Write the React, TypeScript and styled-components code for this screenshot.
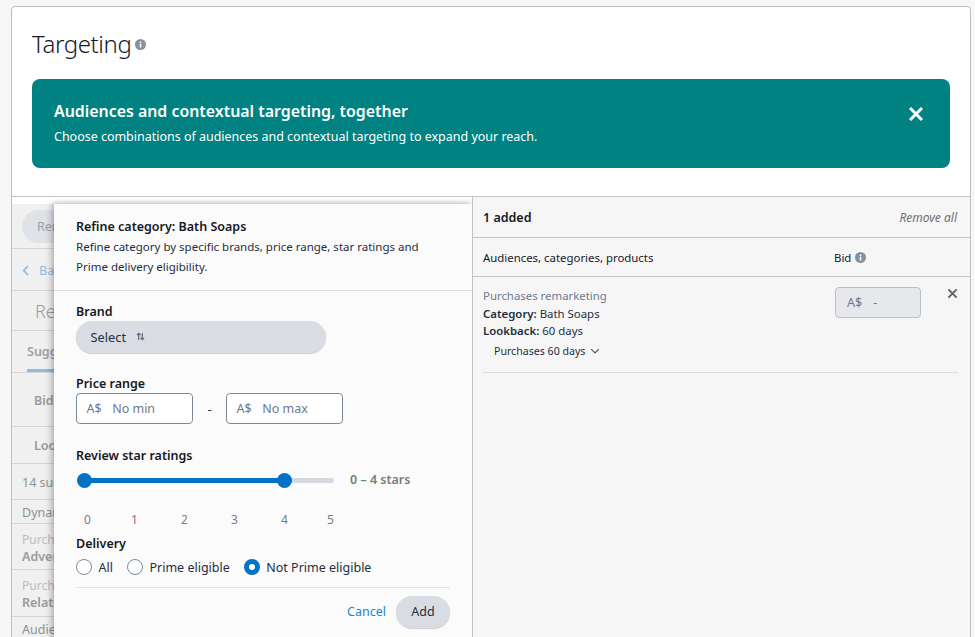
import React from "react";
import styled, { createGlobalStyle } from "styled-components";

const Global = createGlobalStyle`
  html, body { margin: 0; height: 637px; overflow: hidden; background: #f7f7f7; }
  body { font-family: "Noto Sans", "Liberation Sans", sans-serif; font-size: 13px; color: #232f3e; }
  * { box-sizing: border-box; }
`;

const Page = styled.div`
  height: 637px;
  overflow: hidden;
  padding: 6px 4px 0 11px;
`;
const Card = styled.div`
  height: 720px;
  background: #fff;
  border: 1px solid #bdbdbd;
  border-radius: 4px 4px 0 0;
  display: flex;
  flex-direction: column;
`;
const Header = styled.header`
  padding: 19px 20px 28px;
  border-bottom: 1px solid #c4c4c4;
`;
const TitleRow = styled.div`
  display: flex;
  align-items: center;
  gap: 4px;
  height: 36px;
  margin-bottom: 17px;
`;
const Title = styled.h1`
  margin: 0;
  font-size: 24px;
  font-weight: 300;
  line-height: 36px;
  letter-spacing: -0.4px;
  color: #16191f;
`;
const Banner = styled.div`
  height: 89px;
  background: #008282;
  border-radius: 8px;
  padding: 0 26px 1px 22px;
  color: #fff;
  display: flex;
  align-items: center;
  justify-content: space-between;
`;
const BannerClose = styled.span`
  display: flex;
  margin-bottom: 19px;
`;
const BannerTitle = styled.div`
  font-size: 15.9px;
  font-weight: 600;
  line-height: 22px;
  margin-bottom: 6px;
`;
const BannerText = styled.div`
  font-size: 12.48px;
  line-height: 18px;
`;
const Split = styled.div`
  flex: 1;
  display: grid;
  grid-template-columns: 461px 1fr;
`;
const LeftCol = styled.section`
  position: relative;
  padding-top: 7px;
  border-right: 1px solid #c4c4c4;
  overflow: hidden;
`;
const Behind = styled.div`
  height: 100%;
  background: #f0f0f0;
  color: #8d9096;
  font-size: 12.5px;
`;
const BehindRow = styled.div<{ $h: number; $pad?: number }>`
  width: 100%;
  height: ${(p) => p.$h}px;
  padding-left: ${(p) => p.$pad ?? 10}px;
  padding-top: 1px;
  border-bottom: 1px solid #d6d6d6;
  display: flex;
  flex-direction: column;
  justify-content: center;
  white-space: nowrap;
`;
const GhostLast = styled.span`
  line-height: 14px;
`;
const GhostPill = styled.div`
  width: 130px;
  height: 33px;
  border-radius: 17px;
  background: #dfe2e7;
  color: #9aa0a8;
  display: flex;
  align-items: center;
  padding-left: 15px;
`;
const GhostLink = styled.div`
  display: flex;
  align-items: center;
  gap: 9px;
  color: #8fbce0;
`;
const GhostHeading = styled.div`
  font-size: 18px;
  font-weight: 300;
  color: #9b9b9b;
`;
const GhostTab = styled.div`
  font-weight: 600;
  color: #9aa0a8;
  height: 100%;
  line-height: 40px;
  width: 90px;
  border-bottom: 3px solid #8fbce0;
`;
const GhostBold = styled.div`
  font-weight: 600;
  color: #9a9a9a;
`;
const GhostSmall = styled.div`
  font-size: 12px;
  line-height: 17px;
  padding-top: 1px;
  color: #bdbdbd;
`;
const Popover = styled.div`
  position: absolute;
  left: 42px;
  top: 7px;
  right: 0;
  bottom: 0;
  background: #fbfbfb;
  box-shadow: -3px 0 6px rgba(0, 0, 0, 0.22), 0 -2px 5px rgba(0, 0, 0, 0.1);
`;
const PopHead = styled.div`
  padding: 14px 22px 13px;
  border-bottom: 1px solid #dcdcdc;
  height: 87px;
`;
const PopTitle = styled.div`
  font-size: 12.5px;
  font-weight: 600;
  line-height: 18px;
  color: #16191f;
`;
const PopDesc = styled.p`
  margin: 1px 0 0;
  font-size: 11.5px;
  line-height: 20px;
`;
const PopBody = styled.div`
  padding: 0 22px;
`;
const Label = styled.div<{ $top: number }>`
  margin-top: ${(p) => p.$top}px;
  height: 18px;
  padding-top: 1px;
  font-size: 12.5px;
  font-weight: 600;
  line-height: 18px;
  color: #16191f;
`;
const SelectButton = styled.div`
  margin-top: 1px;
  width: 250px;
  height: 32px;
  border-radius: 16px;
  background: #d9dde3;
  box-shadow: 0 1px 1px rgba(0, 0, 0, 0.18);
  display: flex;
  align-items: center;
  gap: 10px;
  padding: 0 0 1px 14.5px;
  font-size: 12.8px;
`;
const PriceRow = styled.div`
  margin-top: 1px;
  display: flex;
  align-items: center;
`;
const PriceBox = styled.div`
  width: 117px;
  height: 31px;
  border: 1px solid #7d8998;
  border-radius: 4px;
  background: #fff;
  display: flex;
  align-items: center;
  padding: 0 0 1px 9.5px;
  gap: 10.5px;
  font-size: 12.5px;
  color: #6c7a8c;
`;
const Dash = styled.span`
  width: 33px;
  text-align: center;
`;
const SliderRow = styled.div`
  margin-top: 8px;
  display: flex;
  align-items: center;
  height: 16px;
`;
const Track = styled.div`
  position: relative;
  margin-left: 8px;
  width: 250px;
  height: 5px;
  border-radius: 3px;
  background: #d5d8de;
`;
const Fill = styled.div`
  height: 100%;
  border-radius: 3px;
  background: #0073c4;
`;
const Thumb = styled.div`
  position: absolute;
  top: -5px;
  margin-left: -7.5px;
  width: 15px;
  height: 15px;
  border-radius: 50%;
  background: #0073c4;
`;
const StarsValue = styled.span`
  margin-left: 16px;
  padding-bottom: 2px;
  font-weight: 600;
  font-size: 12.5px;
  color: #7b7b7b;
`;
const Ticks = styled.div`
  margin-top: 24px;
  width: 262px;
  padding-left: 8px;
  display: grid;
  grid-template-columns: 47px 50px 50px 50px 46px 10px;
  font-size: 12px;
  line-height: 16px;
  color: #7b7b7b;
`;
const RadioRow = styled.div`
  margin-top: 1px;
  display: flex;
  align-items: center;
  height: 28px;
  gap: 14px;
`;
const RadioItem = styled.label`
  display: flex;
  align-items: center;
  gap: 6.5px;
  font-size: 12.5px;
`;
const RadioDot = styled.span<{ $on?: boolean }>`
  width: 16px;
  height: 16px;
  border-radius: 50%;
  background: #fff;
  border: ${(p) => (p.$on ? "5px solid #0073c4" : "1px solid #7d8998")};
`;
const Footer = styled.div`
  margin-top: 6px;
  border-top: 1px solid #e3e5ea;
  padding-top: 8px;
  display: flex;
  justify-content: flex-end;
  align-items: center;
  gap: 10px;
`;
const Cancel = styled.span`
  color: #1b84d0;
  font-size: 12.5px;
  padding-bottom: 1px;
`;
const AddButton = styled.span`
  width: 54px;
  height: 32px;
  border-radius: 16px;
  background: #d9dde3;
  box-shadow: 0 1px 1px rgba(0, 0, 0, 0.18);
  display: flex;
  align-items: center;
  justify-content: center;
  font-size: 12.5px;
  padding-bottom: 1px;
`;
const RightCol = styled.section`
  background: #f6f6f6;
`;
const RightTop = styled.div`
  height: 41px;
  padding: 0 13px 0 10px;
  display: flex;
  align-items: center;
  justify-content: space-between;
  border-bottom: 1px solid #c4c4c4;
`;
const AddedCount = styled.span`
  font-weight: 600;
  font-size: 12.5px;
  color: #16191f;
`;
const RemoveAll = styled.span`
  font-style: italic;
  font-size: 12px;
  color: #6b6f75;
`;
const ColHead = styled.div`
  height: 39px;
  padding: 1px 0 0 10px;
  display: grid;
  grid-template-columns: 351px 1fr;
  align-items: center;
  border-bottom: 1px solid #c4c4c4;
  font-size: 11.4px;
  color: #16191f;
`;
const BidHead = styled.span`
  display: flex;
  align-items: center;
  gap: 4px;
`;
const ItemRow = styled.div`
  margin: 0 12px 0 10px;
  height: 96px;
  border-bottom: 1px solid #dcdcdc;
  display: grid;
  grid-template-columns: 352px 86px 1fr;
  padding-top: 10px;
`;
const ItemInfo = styled.div`
  font-size: 11.4px;
  line-height: 17.5px;
`;
const ItemKind = styled.div`
  color: #6c7a8c;
`;
const Strong = styled.b`
  font-weight: 600;
`;
const LookbackMenu = styled.div`
  margin: 3px 0 0 11px;
  display: flex;
  align-items: center;
  gap: 5px;
  font-size: 10.6px;
`;
const BidBox = styled.div`
  width: 86px;
  height: 31px;
  border: 1px solid #b8c0cb;
  border-radius: 4px;
  background: #e6e8ec;
  color: #6c7a8c;
  font-size: 12.5px;
  display: flex;
  align-items: center;
  padding: 0 0 1px 11px;
  gap: 11px;
`;
const RowClose = styled.div`
  display: flex;
  justify-content: flex-end;
  padding-top: 1px;
`;

const Info = ({ size, color }: { size: number; color: string }) => (
  <svg width={size} height={size} viewBox="0 0 16 16">
    <circle cx="8" cy="8" r="8" fill={color} />
    <rect x="6.9" y="7" width="2.2" height="5.4" fill="#fff" />
    <rect x="6.9" y="3.6" width="2.2" height="2.2" fill="#fff" />
  </svg>
);
const Close = ({ size, color, w }: { size: number; color: string; w: number }) => (
  <svg width={size} height={size} viewBox="0 0 12 12" fill="none" stroke={color} strokeWidth={w}>
    <path d="M1.5 1.5l9 9M10.5 1.5l-9 9" />
  </svg>
);
const SortIcon = () => (
  <svg width="9" height="9" viewBox="0 0 10 10" fill="none" stroke="#5f6b7a" strokeWidth="1.4">
    <path d="M3 9V1.5M1 3.5l2-2 2 2M7 1v7.5M5 6.5l2 2 2-2" />
  </svg>
);
const Chevron = () => (
  <svg width="10" height="10" viewBox="0 0 10 10" fill="none" stroke="#4a5562" strokeWidth="1.2">
    <path d="M1.2 3.2L5 7l3.8-3.8" />
  </svg>
);
const Back = () => (
  <svg width="8" height="11" viewBox="0 0 8 11" fill="none" stroke="#8fbce0" strokeWidth="1.8">
    <path d="M6 1L1.8 5.5 6 10" />
  </svg>
);

export default function App() {
  return (
    <>
      <Global />
      <Page>
        <Card>
          <Header>
            <TitleRow>
              <Title>Targeting</Title>
              <Info size={11} color="#8791a1" />
            </TitleRow>
            <Banner>
              <div>
                <BannerTitle>Audiences and contextual targeting, together</BannerTitle>
                <BannerText>Choose combinations of audiences and contextual targeting to expand your reach.</BannerText>
              </div>
              <BannerClose><Close size={16} color="#fff" w={2.2} /></BannerClose>
            </Banner>
          </Header>
          <Split>
            <LeftCol>
              <Behind>
                <BehindRow $h={45}><GhostPill>Remo</GhostPill></BehindRow>
                <BehindRow $h={42}><GhostLink><Back /><span>Back</span></GhostLink></BehindRow>
                <BehindRow $h={40} $pad={23}><GhostHeading>Refi</GhostHeading></BehindRow>
                <BehindRow $h={42} $pad={15}><GhostTab>Sugge</GhostTab></BehindRow>
                <BehindRow $h={54} $pad={22}><GhostBold>Bid</GhostBold></BehindRow>
                <BehindRow $h={37} $pad={22}><GhostBold>Look</GhostBold></BehindRow>
                <BehindRow $h={36}><span>14 sug</span></BehindRow>
                <BehindRow $h={24}><span>Dynam</span></BehindRow>
                <BehindRow $h={46}><GhostSmall>Purcha</GhostSmall><GhostBold>Adver</GhostBold></BehindRow>
                <BehindRow $h={47}><GhostSmall>Purcha</GhostSmall><GhostBold>Relate</GhostBold></BehindRow>
                <BehindRow $h={25}><GhostLast>Audien</GhostLast></BehindRow>
              </Behind>
              <Popover>
                <PopHead>
                  <PopTitle>Refine category: Bath Soaps</PopTitle>
                  <PopDesc>
                    Refine category by specific brands, price range, star ratings and
                    <br />
                    Prime delivery eligibility.
                  </PopDesc>
                </PopHead>
                <PopBody>
                  <Label $top={11}>Brand</Label>
                  <SelectButton>
                    <span>Select</span>
                    <SortIcon />
                  </SelectButton>
                  <Label $top={21}>Price range</Label>
                  <PriceRow>
                    <PriceBox><span>A$</span><span>No min</span></PriceBox>
                    <Dash>-</Dash>
                    <PriceBox><span>A$</span><span>No max</span></PriceBox>
                  </PriceRow>
                  <Label $top={22}>Review star ratings</Label>
                  <SliderRow>
                    <Track>
                      <Fill style={{ width: "80%" }} />
                      <Thumb style={{ left: "0%" }} />
                      <Thumb style={{ left: "80%" }} />
                    </Track>
                    <StarsValue>0 – 4 stars</StarsValue>
                  </SliderRow>
                  <Ticks>
                    {[0, 1, 2, 3, 4, 5].map((n) => (
                      <span key={n}>{n}</span>
                    ))}
                  </Ticks>
                  <Label $top={6}>Delivery</Label>
                  <RadioRow>
                    <RadioItem><RadioDot /><span>All</span></RadioItem>
                    <RadioItem><RadioDot /><span>Prime eligible</span></RadioItem>
                    <RadioItem><RadioDot $on /><span>Not Prime eligible</span></RadioItem>
                  </RadioRow>
                  <Footer>
                    <Cancel>Cancel</Cancel>
                    <AddButton>Add</AddButton>
                  </Footer>
                </PopBody>
              </Popover>
            </LeftCol>
            <RightCol>
              <RightTop>
                <AddedCount>1 added</AddedCount>
                <RemoveAll>Remove all</RemoveAll>
              </RightTop>
              <ColHead>
                <span>Audiences, categories, products</span>
                <BidHead>Bid <Info size={11} color="#8791a1" /></BidHead>
              </ColHead>
              <ItemRow>
                <ItemInfo>
                  <ItemKind>Purchases remarketing</ItemKind>
                  <div><Strong>Category:</Strong> Bath Soaps</div>
                  <div><Strong>Lookback:</Strong> 60 days</div>
                  <LookbackMenu>Purchases 60 days <Chevron /></LookbackMenu>
                </ItemInfo>
                <BidBox><span>A$</span><span>-</span></BidBox>
                <RowClose><Close size={11} color="#5f6468" w={2.2} /></RowClose>
              </ItemRow>
            </RightCol>
          </Split>
        </Card>
      </Page>
    </>
  );
}
